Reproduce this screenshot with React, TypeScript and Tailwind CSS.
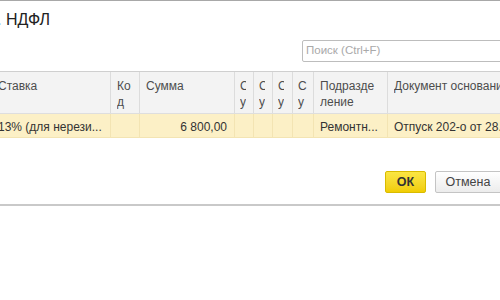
import React from "react";

type Col = { w: string; head: string[]; cell: string; first?: boolean; right?: boolean; clip?: string };

const cols: Col[] = [
  { w: "w-[110px]", head: ["Ставка"], cell: "13% (для нерези...", first: true },
  { w: "w-[29px]", head: ["Ко", "д"], cell: "" },
  { w: "w-[95px]", head: ["Сумма"], cell: "6 800,00", right: true },
  { w: "w-[19px]", head: ["С", "у"], cell: "", clip: "w-[6px]" },
  { w: "w-[19px]", head: ["С", "у"], cell: "", clip: "w-[6px]" },
  { w: "w-[20px]", head: ["С", "у"], cell: "", clip: "w-[6px]" },
  { w: "w-[21px]", head: ["С", "у"], cell: "", clip: "w-[10px]" },
  { w: "w-[74px]", head: ["Подразде", "ление"], cell: "Ремонтн..." },
  { w: "w-[140px]", head: ["Документ основание"], cell: "Отпуск 202-о от 28.03.2019" },
];

export default function App() {
  return (
    <div
      className="w-[500px] h-[300px] bg-white overflow-hidden flex flex-col"
      style={{ fontFamily: '"Liberation Sans", Arial, sans-serif' }}
    >
      <div className="h-px bg-[#a8a8a8] shrink-0" />
      {/* title */}
      <div className="h-[38px] shrink-0 flex items-end pb-[10px]">
        <span className="text-[16px] leading-[18px] text-[#222] whitespace-nowrap -ml-[3px]">
          . НДФЛ
        </span>
      </div>
      {/* search */}
      <div className="h-[32px] shrink-0 flex pt-px">
        <div className="ml-[302px] w-[220px] h-[22px] border border-[#bdbdbd] rounded-[2px] flex items-center pl-[3px] shrink-0">
          <span className="text-[11.5px] text-[#a9a9a9] whitespace-nowrap">Поиск (Ctrl+F)</span>
        </div>
      </div>
      {/* table */}
      <div className="border-t border-[#cfcfcf] shrink-0">
        <div className="flex h-[42px] bg-[#f3f3f3] border-b border-[#dedede] whitespace-nowrap">
          {cols.map((c, i) => (
            <div
              key={i}
              className={`${c.w} shrink-0 overflow-hidden ${i > 0 ? "border-l border-[#dcdcdc]" : ""} ${c.clip ? "pl-[5px]" : i > 0 ? "pl-[6px]" : ""} pt-[6px] text-[12px] leading-[16px] text-[#4d4d4d]`}
            >
              <div className={`${c.clip ?? ""} overflow-hidden`}>
                {c.head.map((h, j) => (
                  <div key={j} className={c.first ? "-ml-[2px]" : ""}>
                    {h}
                  </div>
                ))}
              </div>
            </div>
          ))}
        </div>
        <div className="flex h-[24px] bg-[#fcf0c6] border-b border-[#f3e4b3] whitespace-nowrap">
          {cols.map((c, i) => (
            <div
              key={i}
              className={`${c.w} shrink-0 overflow-hidden ${i > 0 ? "border-l border-[#f3e4b3]" : ""} ${c.right ? "pr-[7px] text-right" : i > 0 ? "pl-[6px]" : ""} flex items-center pt-[3px] text-[12px] text-[#333]`}
            >
              <span className={`${c.right ? "w-full" : ""} ${c.first ? "-ml-[2px]" : ""}`}>{c.cell}</span>
            </div>
          ))}
        </div>
      </div>
      {/* buttons */}
      <div className="h-[33px] shrink-0" />
      <div className="flex h-[22px] shrink-0">
        <div className="ml-[385px] w-[41px] h-[22px] rounded-[2px] border border-[#d9bb00] bg-gradient-to-b from-[#fbe642] to-[#f1cd00] flex items-center justify-center text-[12.5px] font-bold text-[#333] shrink-0">
          ОК
        </div>
        <div className="ml-[9px] w-[70px] h-[22px] rounded-[2px] border border-[#c4c4c4] bg-gradient-to-b from-[#ffffff] to-[#ececec] flex items-center justify-center text-[12.5px] text-[#444] shrink-0 pr-[4px]">
          Отмена
        </div>
      </div>
      <div className="h-[11px] shrink-0" />
      <div className="h-[2px] bg-[#c9c9c9] shrink-0" />
    </div>
  );
}
